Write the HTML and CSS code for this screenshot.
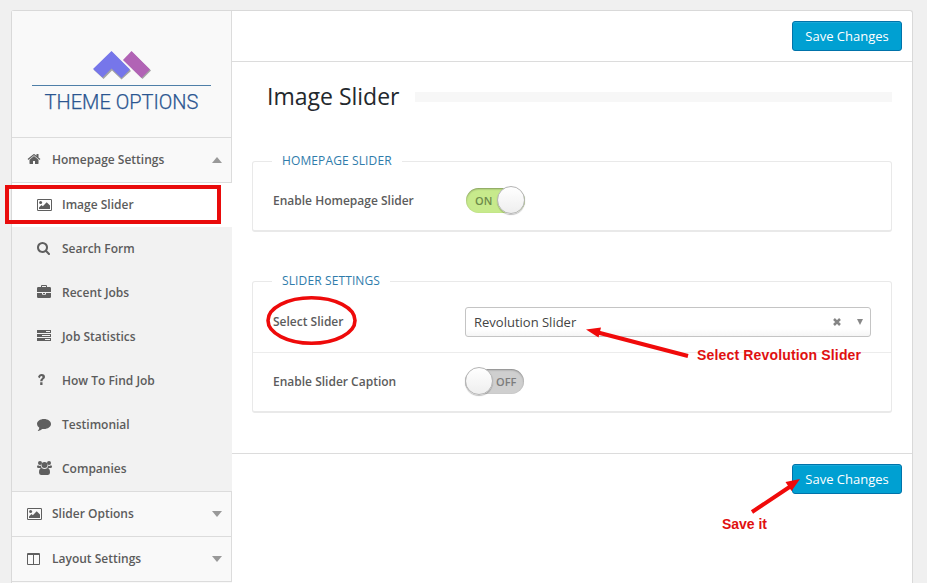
FILE: index.html
```
<!DOCTYPE html>
<html lang="en">
<head>
<meta charset="utf-8">
<title>Theme Options</title>
<link rel="stylesheet" href="styles.css">
</head>
<body>
<svg width="0" height="0" class="defs">
  <symbol id="picture" viewBox="0 0 15 12"><path fill-rule="evenodd" d="M1.2 0h12.6Q15 0 15 1.200v9.600q0 1.200-1.200 1.200H1.200Q0 12 0 10.800V1.200Q0 0 1.200 0zM1.300 1q-.3 0-.3.300v9.400q0 .300.300.300h12.400q.300 0 .300-.300V1.300q0-.300-.300-.300z"/><circle cx="3.600" cy="3.500" r="1.500"/><path d="M2 10V8.500L4.500 6l1.300 1.300L9.700 3.300 13 6.500V10z"/></symbol>
</svg>
<div class="panel">
  <aside class="sidebar">
    <div class="logo">
      <svg class="mark" width="60" height="32" viewBox="0 0 60 32">
        <g class="mark-shadow"><path d="M20 2 39 21 29.500 29.500 20 20.500 11.500 29 2 20z"/><path d="M40 2 59 20.500 50.500 29 31.500 10z"/></g>
        <path fill="#7676ea" d="M19.500 1 38 19.500 29.500 28 19.500 18.500 10.500 27.500 1 19z"/>
        <path fill="#b163b5" d="M39.500 1 58 19.500 49.500 28 31 10z"/>
      </svg>
      <div class="logo-text"><span>THEME OPTIONS</span></div>
    </div>
    <div class="group open"><svg class="icon" width="14" height="14" viewBox="0 0 1792 1792"><path d="M1472 992v480q0 26-19 45t-45 19h-384v-384h-256v384h-384q-26 0-45-19t-19-45v-480q0-1 .5-3t.5-3l575-474 575 474q1 2 1 6zm223-69l-62 74q-8 9-21 11h-3q-13 0-21-7l-692-577-692 577q-12 8-24 7-13-2-21-11l-62-74q-8-10-7-23.500t11-21.500l719-599q32-26 76-26t76 26l244 204v-195q0-14 9-23t23-9h192q14 0 23 9t9 23v408l219 182q10 8 11 21.500t-7 23.500z"/></svg><span>Homepage Settings</span><i class="caret up"></i></div>
    <ul class="submenu">
      <li class="active"><svg class="icon" width="15" height="12"><use href="#picture"/></svg><span>Image Slider</span></li>
      <li><svg class="icon" width="13" height="13" viewBox="0 128 1664 1664"><path transform="translate(-64 0)" d="M1216 832q0-185-131.500-316.500t-316.500-131.500-316.500 131.500-131.500 316.500 131.500 316.500 316.500 131.500 316.500-131.500 131.500-316.500zm512 832q0 52-38 90t-90 38q-54 0-90-38l-343-342q-179 124-399 124-143 0-273.500-55.500t-225-150-150-225-55.500-273.500 55.500-273.500 150-225 225-150 273.500-55.500 273.500 55.500 225 150 150 225 55.500 273.500q0 220-124 399l343 343q37 37 37 90z"/></svg><span>Search Form</span></li>
      <li><svg class="icon lift" width="14" height="13" viewBox="0 0 14 13"><path fill-rule="evenodd" d="M4 2V1q0-1 1-1h4q1 0 1 1v1h2.700Q14 2 14 3.300V7H0V3.300Q0 2 1.300 2zM5 2h4V1H5zM0 8h5v1q0 .700.700.700h2.600Q9 9.700 9 9V8h5v3.700q0 1.300-1.300 1.300H1.300Q0 13 0 11.700zM6 8h2v1H6z"/></svg><span>Recent Jobs</span></li>
      <li><svg class="icon lift" width="14" height="11" viewBox="0 0 14 11"><path fill-rule="evenodd" d="M0 0h14v3H0zM9 1v1h4V1zM0 4h14v3H0zM5 5v1h8V5zM0 8h14v3H0zM8 9v1h5V9z"/></svg><span>Job Statistics</span></li>
      <li><svg class="icon lift" width="9" height="11" viewBox="0 0 9 11"><path d="M3.200 8.300h2.300V11H3.200zM1 3Q2 0 4.600 0 8 .200 8 3 8 4.400 6.500 5.300 5.500 5.900 5.500 7.300H3.200Q3.100 5.500 4.500 4.600 5.600 3.900 5.500 3.100 5.400 2.100 4.400 2.100 3.300 2.200 2.700 4.200z"/></svg><span>How To Find Job</span></li>
      <li><svg class="icon" width="14" height="12" viewBox="0 0 14 12"><path d="M7 0c3.900 0 7 2.200 7 5s-3.100 5-7 5q-.9 0-1.700-.1Q3.600 11.500 1.200 12q-.5 0-.3-.5Q2.300 10.500 2.300 8.800 0 7.300 0 5c0-2.800 3.100-5 7-5z"/></svg><span>Testimonial</span></li>
      <li><svg class="icon people" width="15" height="14" viewBox="0 0 15 14"><circle cx="3" cy="2" r="2"/><circle cx="12" cy="2" r="2"/><circle cx="7.500" cy="4" r="3"/><path d="M1 4.200q2 1.200 3 .3-.1 1.600.8 2.500H1.500Q0 7 0 5.800 0 4.300 1 4.200zM14 4.200q-2 1.200-3 .3.100 1.600-.8 2.500h3.300Q15 7 15 5.800 15 4.300 14 4.200zM4.600 7.100q2.900 2 5.800 0Q13 7.300 13 11.600 13 14 11 14H4Q2 14 2 11.600 2 7.300 4.600 7.100z"/></svg><span>Companies</span></li>
    </ul>
    <div class="group"><svg class="icon" width="15" height="12"><use href="#picture"/></svg><span>Slider Options</span><i class="caret"></i></div>
    <div class="group"><svg class="icon" width="13" height="12" viewBox="0 0 13 12"><path fill-rule="evenodd" d="M1 0h11q1 0 1 1v10q0 1-1 1H1q-1 0-1-1V1q0-1 1-1zM1 2v9h5V2zM7 2v9h5V2z"/></svg><span>Layout Settings</span><i class="caret"></i></div>
  </aside>
  <main class="main">
    <div class="bar"><button class="save">Save Changes</button></div>
    <section class="content">
      <h1 class="title"><span>Image Slider</span></h1>
      <fieldset class="box first">
        <legend>HOMEPAGE SLIDER</legend>
        <div class="row"><label>Enable Homepage Slider</label><div class="toggle on"><span>ON</span><i class="knob"></i></div></div>
      </fieldset>
      <fieldset class="box">
        <legend>SLIDER SETTINGS</legend>
        <div class="row tall"><label>Select Slider</label><div class="select"><span>Revolution Slider</span><svg width="8" height="8" viewBox="0 0 8 8"><path d="M1 1l6 6M7 1L1 7" stroke="#858585" stroke-width="2.500"/></svg><i class="arrow"></i></div></div>
        <div class="row last"><label>Enable Slider Caption</label><div class="toggle off"><i class="knob"></i><span>OFF</span></div></div>
      </fieldset>
    </section>
    <div class="bar bottom"><button class="save">Save Changes</button></div>
  </main>
</div>
<svg class="notes" width="927" height="583" viewBox="0 0 927 583">
  <rect x="7" y="187" width="212" height="35" fill="none" stroke="#e90b0b" stroke-width="4"/>
  <ellipse cx="311.500" cy="320.500" rx="43.500" ry="22.700" fill="none" stroke="#ee0a0a" stroke-width="3.600"/>
  <path d="M688 356 598 332.500M752 512 791 486" stroke="#f00a0a" stroke-width="4" fill="none"/>
  <path d="M586 329.500 601 327.500 598.500 337.500zM800 479 791.500 491 785.500 482z" fill="#f00a0a"/>
  <text x="697" y="360" textLength="164">Select Revolution Slider</text>
  <text x="722" y="529" textLength="45">Save it</text>
</svg>
</body>
</html>
```
FILE: styles.css
```
* { box-sizing: border-box; }
body {
  margin: 0;
  height: 583px;
  padding: 10px 14px 0 11px;
  overflow: hidden;
  position: relative;
  background: #f0f0f0;
  color: #5c5c5c;
  font: 600 12px "Open Sans", sans-serif;
}
.defs { position: absolute; }
.panel {
  display: flex;
  width: 902px;
  height: 573px;
  background: #fff;
  border: 1px solid #d9d9d9;
  border-bottom: 0;
  border-radius: 3px 3px 0 0;
}
.sidebar { width: 220px; flex: none; background: linear-gradient(#f9f9f9, #f9f9f9) bottom / 100% 2px no-repeat; }
.logo {
  height: 127px;
  padding-top: 39px;
  background: #f9f9f9;
  border: solid #dcdcdc;
  border-width: 0 1px 1px 0;
  display: flex;
  flex-direction: column;
  align-items: center;
}
.mark { flex: none; margin-left: 1px; }
.mark-shadow { fill: #777; opacity: .65; filter: blur(.6px); }
.logo-text {
  width: 179px;
  margin-top: 3px;
  border-top: 1px solid #4e7fa8;
  color: #2a5590;
  font: 300 20px/32px Roboto, sans-serif;
  -webkit-text-stroke: .25px #2a5590;
  text-align: center;
  white-space: nowrap;
}
.group {
  display: flex;
  align-items: center;
  height: 45px;
  padding: 0 9px 0 15px;
  background: #f9f9f9;
  border: solid #dcdcdc;
  border-width: 0 1px 1px 0;
}
.icon { fill: #5f5f5f; flex: none; }
.icon.lift { margin-bottom: 3px; }
.icon.people { margin-bottom: 2px; }
.open .icon { margin-bottom: 2px; }
.group span { margin-left: auto; width: 160px; padding-bottom: 1px; }
.submenu + .group { height: 46px; border-top-width: 1px; }
.group .caret { flex: none; }
.caret { border: solid transparent; border-width: 6px 5px 0; border-top-color: #999; }
.caret.up { border-width: 0 5px 6px; border-bottom-color: #999; }
.submenu { list-style: none; margin: 0; padding: 0; background: #f2f2f2; }
.submenu li { display: flex; align-items: center; height: 44px; padding: 0 0 1px 25px; }
.submenu li.active { background: #fff; }
.submenu span { margin-left: auto; width: 170px; }
.main { flex: 1; }
.bar {
  display: flex;
  justify-content: flex-end;
  height: 51px;
  padding: 10px 10px 0 0;
  border-bottom: 1px solid #dcdcdc;
}
.bar.bottom { border-bottom: 0; border-top: 1px solid #dcdcdc; }
.save {
  width: 110px;
  height: 30px;
  padding: 0;
  border: 1px solid #0073aa;
  border-radius: 3px;
  background: #00a0d2;
  box-shadow: inset 0 1px 0 #1aa9d8;
  color: #fff;
  font: 400 13px "Open Sans", sans-serif;
}
.content { height: 391px; padding: 18px 20px 0; }
.title {
  display: flex;
  align-items: center;
  margin: 0;
  padding-left: 15px;
  height: 34px;
  color: #23282d;
  font: 400 23px "Open Sans", sans-serif;
}
.title span { padding-bottom: 3px; }
.title::after { content: ""; flex: 1; height: 10px; margin-left: 15px; background: #f7f7f7; }
.box {
  margin: 0 0 39px;
  padding: 0;
  border: 1px solid #e9e9e9;
  border-bottom: 2px solid #e9e9e9;
  border-radius: 3px;
}
.first { margin-top: 37px; }
legend {
  height: 20px;
  margin-left: 19px;
  padding: 0 10px;
  color: #2f7cab;
  font: 500 12px/20px "Open Sans", sans-serif;
  letter-spacing: .12px;
}
.row { display: flex; align-items: center; height: 59px; padding-left: 20px; }
.row label { width: 192px; }
.row.tall { height: 62px; border-bottom: 1px solid #ececec; }
.row.last { height: 58px; padding-bottom: 1px; }
.select {
  display: flex;
  align-items: center;
  width: 406px;
  height: 30px;
  padding: 0 7px 0 8px;
  border: 1px solid #c4c4c4;
  border-radius: 3px;
  background: linear-gradient(#fff 75%, #f5f5f5);
  color: #444;
  font-size: 13px;
  font-weight: 400;
}
.select span { flex: 1; }
.arrow { margin-left: 16px; border: solid transparent; border-width: 6px 3.5px 0; border-top-color: #888; }
.toggle {
  position: relative;
  display: flex;
  align-items: center;
  width: 59px;
  height: 25px;
  border-radius: 13px;
  font-size: 11px;
  color: #7c7c7c;
  background: #cfcfcf;
  box-shadow: inset 0 1px 2px rgba(0,0,0,.35);
}
.toggle.on { background: #c7ea8c; margin-left: 1px; color: #6e8a4a; }
.toggle.on span { margin-left: 9px; }
.toggle.off span { margin-left: 31px; }
.knob {
  position: absolute;
  top: -2px;
  width: 28px;
  height: 28px;
  border-radius: 50%;
  border: 1px solid #b5b5b5;
  background: linear-gradient(#fff, #eee);
  box-shadow: 0 1px 1px rgba(0,0,0,.25);
}
.on .knob { right: 0; }
.off .knob { left: 0; }
.notes { position: absolute; left: 0; top: 0; pointer-events: none; }
.notes text { fill: #e01010; font: 700 14px "Liberation Sans", sans-serif; }
```
